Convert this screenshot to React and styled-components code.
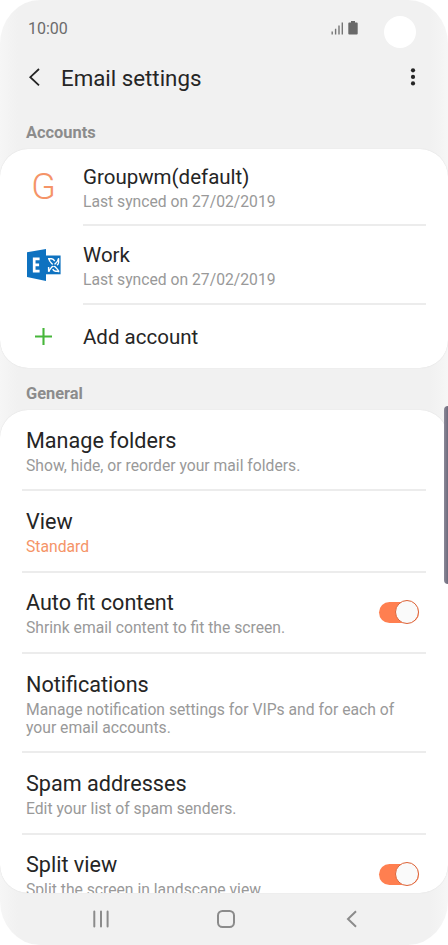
import styled, { createGlobalStyle } from "styled-components";

const GlobalStyle = createGlobalStyle`
    * {
        box-sizing: border-box;
    }
    body {
        margin: 0;
        background: #ffffff;
        font-family: Roboto, "Liberation Sans", sans-serif;
    }
`

const Phone = styled.div`
    position: relative;
    display: flex;
    flex-direction: column;
    width: 448px;
    height: 945px;
    overflow: hidden;
    border-radius: 40px / 44px;
    background: linear-gradient(90deg, #f6f6f6 0, #f3f3f3 10px, #f1f1f1 18px, #f1f1f1 430px, #f3f3f3 438px, #f6f6f6 448px);
`

const StatusBar = styled.div`
    display: flex;
    align-items: center;
    height: 58px;
    padding: 0 32px 0 28px;
`

const Time = styled.span`
    flex: 1;
    font-size: 16px;
    line-height: 20px;
    color: #6b6b6b;
`

const Camera = styled.span`
    width: 32px;
    height: 32px;
    margin: 5px 0 0 26px;
    border-radius: 50%;
    background: #ffffff;
`

const Header = styled.header`
    display: flex;
    align-items: center;
    height: 40px;
    padding: 0 30px 0 28px;
`

const Title = styled.h1`
    flex: 1;
    margin: 0 0 1px 19px;
    font-size: 22.3px;
    font-weight: 400;
    line-height: 28px;
    color: #252525;
`

const SectionLabel = styled.h2`
    margin: 0;
    padding: ${({ $top }) => $top}px 26px 0;
    height: ${({ $height }) => $height}px;
    font-size: 16.4px;
    font-weight: 700;
    line-height: 20px;
    color: #8c8c8c;
`

const Card = styled.section`
    flex: ${({ $fill }) => ($fill ? "1 1 0" : "none")};
    min-height: 0;
    overflow: hidden;
    border-radius: 28px;
    background: #ffffff;
    box-shadow: 0 0 1px #d0d0d0;
`

const AccountRow = styled.div`
    display: flex;
    height: ${({ $height }) => $height}px;
    padding-right: 22px;
`

const AccountIcon = styled.div`
    display: flex;
    align-items: center;
    justify-content: center;
    width: 83px;
    padding: 0 0 1px 4px;
`

const Initial = styled.span`
    font-size: 36px;
    font-weight: 300;
    line-height: 36px;
    color: #f59468;
`

const AccountText = styled.div`
    flex: 1;
    padding-top: ${({ $top }) => $top}px;
    border-bottom: ${({ $last }) => ($last ? "none" : "2px solid #ececec")};
`

const SettingRow = styled.div`
    display: flex;
    align-items: center;
    height: ${({ $height }) => $height}px;
    margin: 0 22px;
    padding: 3px 7px 0 4px;
    border-bottom: 2px solid #ececec;
`

const SettingText = styled.div`
    flex: 1;
`

const RowTitle = styled.div`
    font-size: ${({ $large }) => ($large ? "21.6px" : "20.5px")};
    line-height: 26px;
    color: #252525;
`

const RowDesc = styled.div`
    font-size: 15.7px;
    line-height: 18px;
    margin-top: 3px;
    white-space: pre-line;
    color: ${({ $accent }) => ($accent ? "#f59468" : "#999999")};
`

const Switch = styled.span`
    display: flex;
    justify-content: flex-end;
    align-items: center;
    width: 40px;
    height: 21px;
    margin-bottom: 3px;
    border-radius: 11px;
    background: #ff7f50;
`

const Knob = styled.span`
    flex: none;
    width: 24px;
    height: 24px;
    border: 1px solid #dc6236;
    border-radius: 50%;
    background: #fafafa;
`

const NavBar = styled.nav`
    display: flex;
    align-items: center;
    height: 52px;
    padding-left: 92px;
`

const EdgeHandle = styled.div`
    position: absolute;
    top: 406px;
    right: -4px;
    width: 8px;
    height: 178px;
    border-radius: 4px;
    background: linear-gradient(90deg, #8b8998, #6d6a7c 50%);
`

const SignalIcon = () => (
    <svg width="13" height="14" viewBox="0 0 13 14" stroke="#757575" strokeWidth="1.4">
        <path d="M1.2 12.5v-3M4.6 12.5V6.8M8 12.5v-9M11.3 12.5V.5" />
    </svg>
)

const BatterySvg = styled.svg`
    margin: 0 0 2px 4px;
`

const BatteryIcon = () => (
    <BatterySvg width="10" height="14" viewBox="0 0 10 14" fill="#696969">
        <path d="M3 0h4v1.5h1.8q.9 0 .9.9v10.2q0 .9-.9.9H1.2q-.9 0-.9-.9V2.4q0-.9.9-.9H3z" />
    </BatterySvg>
)

const BackIcon = () => (
    <svg width="14" height="20" viewBox="0 0 14 20" fill="none" stroke="#252525" strokeWidth="1.8">
        <path d="M11 1 2.3 9.2 11 17.4" />
    </svg>
)

const MoreIcon = () => (
    <svg width="10" height="20" viewBox="0 0 10 20" fill="#252525">
        <circle cx="5" cy="2.3" r="2.1" />
        <circle cx="5" cy="8.9" r="2.1" />
        <circle cx="5" cy="15.4" r="2.1" />
    </svg>
)

const ExchangeIcon = () => (
    <svg width="34" height="32" viewBox="0 0 34 32" fill="none">
        <path d="M19 6.5h14.6v18.8H19z" fill="#0e72c0" />
        <g stroke="#fff" strokeWidth="1.4">
            <path d="M22 9.2q0 3 2.5 5l5 5q2 1.6 2 4M31.7 9.2q-.5 3-3 5l-4.5 4.5q-2 1.8-2.2 4" />
            <path d="M21 9.8h3.5q2 .3 3.2 2.3M31.6 10v3.5q0 1.6-1.6 2.7M32.3 22.3h-3.6q-2-.3-3-2.2M21.6 22.8V18" />
        </g>
        <path d="m26.6 14.6 1.5 1.5-1.5 1.5-1.5-1.5z" fill="#0e72c0" />
        <path d="M0 3.2 19 0v32L0 28z" fill="#0e72c0" />
        <path d="M12.6 9.8H7.2v12.4h5.4M7.2 15.8h4.9" stroke="#fff" strokeWidth="2.7" />
    </svg>
)

const PlusIcon = () => (
    <svg width="18" height="18" viewBox="0 0 18 18" stroke="#46b63a" strokeWidth="2.1">
        <path d="M8.5 1v17M0 9.5h17" />
    </svg>
)

const RecentsIcon = () => (
    <svg width="18" height="18" viewBox="0 0 18 18" stroke="#8b8b8b" strokeWidth="2" strokeLinecap="round">
        <path d="M2.3 1.5v15M9 1.5v15M15.6 1.5v15" />
    </svg>
)

const HomeSvg = styled.svg`
    margin: 0 111px 0 107px;
`

const HomeIcon = () => (
    <HomeSvg width="18" height="18" viewBox="0 0 18 18" fill="none" stroke="#8b8b8b" strokeWidth="2">
        <rect x="1" y="1" width="16" height="16" rx="4.5" />
    </HomeSvg>
)

const NavBackIcon = () => (
    <svg width="12" height="18" viewBox="0 0 12 18" fill="none" stroke="#8b8b8b" strokeWidth="2">
        <path d="M10 1.3 2 9l8 7.7" />
    </svg>
)

const settings = [
    { title: "Manage folders", desc: "Show, hide, or reorder your mail folders.", height: 81.4 },
    { title: "View", desc: "Standard", accent: true, height: 81.4 },
    { title: "Auto fit content", desc: "Shrink email content to fit the screen.", toggle: true, height: 81.4 },
    {
        title: "Notifications",
        desc: "Manage notification settings for VIPs and for each of\nyour email accounts.",
        height: 99.2,
    },
    { title: "Spam addresses", desc: "Edit your list of spam senders.", height: 81.4 },
    { title: "Split view", desc: "Split the screen in landscape view.", toggle: true, height: 81.4 },
]

const App = () => {
    return (
        <>
            <GlobalStyle />
            <Phone>
                <StatusBar>
                    <Time>10:00</Time>
                    <SignalIcon />
                    <BatteryIcon />
                    <Camera />
                </StatusBar>
                <Header>
                    <BackIcon />
                    <Title>Email settings</Title>
                    <MoreIcon />
                </Header>

                <SectionLabel $top={25} $height={51}>Accounts</SectionLabel>
                <Card>
                    <AccountRow $height={77}>
                        <AccountIcon>
                            <Initial>G</Initial>
                        </AccountIcon>
                        <AccountText $top={15}>
                            <RowTitle>Groupwm(default)</RowTitle>
                            <RowDesc>Last synced on 27/02/2019</RowDesc>
                        </AccountText>
                    </AccountRow>
                    <AccountRow $height={78.5}>
                        <AccountIcon>
                            <ExchangeIcon />
                        </AccountIcon>
                        <AccountText $top={16}>
                            <RowTitle>Work</RowTitle>
                            <RowDesc>Last synced on 27/02/2019</RowDesc>
                        </AccountText>
                    </AccountRow>
                    <AccountRow $height={63.5}>
                        <AccountIcon>
                            <PlusIcon />
                        </AccountIcon>
                        <AccountText $top={19} $last>
                            <RowTitle>Add account</RowTitle>
                        </AccountText>
                    </AccountRow>
                </Card>

                <SectionLabel $top={16} $height={42}>General</SectionLabel>
                <Card $fill>
                    {settings.map((item) => (
                        <SettingRow key={item.title} $height={item.height}>
                            <SettingText>
                                <RowTitle $large>{item.title}</RowTitle>
                                <RowDesc $accent={item.accent}>{item.desc}</RowDesc>
                            </SettingText>
                            {item.toggle && (
                                <Switch>
                                    <Knob />
                                </Switch>
                            )}
                        </SettingRow>
                    ))}
                </Card>

                <NavBar>
                    <RecentsIcon />
                    <HomeIcon />
                    <NavBackIcon />
                </NavBar>
                <EdgeHandle />
            </Phone>
        </>
    )
}

export default App
